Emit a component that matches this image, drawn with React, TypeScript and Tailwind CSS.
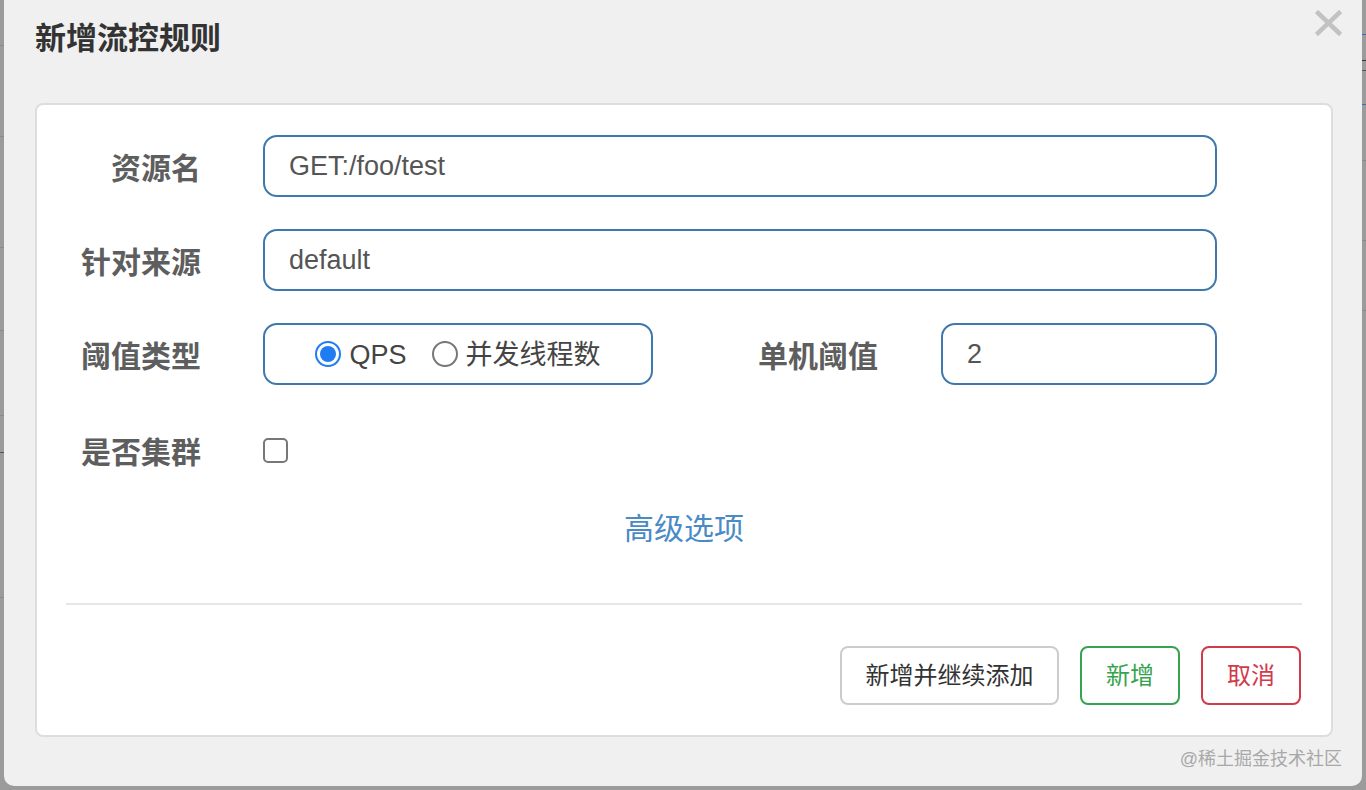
import React from "react";

const FONT = { fontFamily: '"Liberation Sans", "Noto Sans CJK SC", sans-serif' };

function Strip({ lines }: { lines: { top: number; color: string }[] }) {
  return (
    <div className="relative w-[4px] h-full shrink-0 bg-[#9b9b9b]">
      {lines.map((l, i) => (
        <div key={i} className="absolute left-0 w-full h-[1px]" style={{ top: l.top, background: l.color }} />
      ))}
    </div>
  );
}

function Label({ children, w = "w-[164px]" }: { children: React.ReactNode; w?: string }) {
  return (
    <div className={`${w} shrink-0 pt-[6px] text-right text-[30px] font-bold text-[#5e5e5e] leading-none`}>{children}</div>
  );
}

function TextBox({ value, w }: { value: string; w: string }) {
  return (
    <div className={`${w} h-[62px] border-2 border-[#3f78ad] rounded-[14px] flex items-center pl-[24px] text-[27px] text-[#555]`}>
      {value}
    </div>
  );
}

export default function App() {
  return (
    <div className="w-[1366px] h-[790px] flex bg-[#9b9b9b] overflow-hidden" style={FONT}>
      <Strip
        lines={[
          { top: 45, color: "#8a8a8a" },
          { top: 136, color: "#8a8a8a" },
          { top: 247, color: "#8a8a8a" },
          { top: 330, color: "#8a8a8a" },
          { top: 415, color: "#8a8a8a" },
          { top: 452, color: "#555" },
          { top: 597, color: "#8a8a8a" },
        ]}
      />
      <div className="relative w-[1358px] h-[786px] shrink-0 bg-[#f0f0f0] rounded-b-[10px] flex flex-col">
        <div className="h-[76px] flex items-center pl-[31px] text-[31px] font-bold text-[#333] leading-none">
          新增流控规则
        </div>
        <button className="absolute right-[20px] top-[10px] w-[27px] h-[26px]">
          <svg width="27" height="26" viewBox="0 0 27 26">
            <path d="M3 3 L24 23 M24 3 L3 23" stroke="#c2c2c2" strokeWidth="4.5" strokeLinecap="square" />
          </svg>
        </button>
        <div className="mt-[27px] ml-[31px] mr-[29px] h-[634px] border-2 border-[#dddddd] rounded-[8px] bg-white flex flex-col pt-[30px]">
          <div className="flex flex-col gap-[32px]">
            <div className="flex items-center h-[62px]">
              <Label>资源名</Label>
              <div className="ml-[62px]">
                <TextBox value="GET:/foo/test" w="w-[954px]" />
              </div>
            </div>
            <div className="flex items-center h-[62px]">
              <Label>针对来源</Label>
              <div className="ml-[62px]">
                <TextBox value="default" w="w-[954px]" />
              </div>
            </div>
            <div className="flex items-center h-[62px]">
              <Label>阈值类型</Label>
              <div className="ml-[62px] w-[390px] h-[62px] border-2 border-[#3f78ad] rounded-[14px] flex items-center justify-center text-[27px] text-[#444]">
                <span className="w-[26px] h-[26px] rounded-full border-2 border-[#1f7cf3] flex items-center justify-center">
                  <span className="w-[16px] h-[16px] rounded-full bg-[#1f7cf3]" />
                </span>
                <span className="ml-[8px] pt-[3px]">QPS</span>
                <span className="ml-[25px] w-[26px] h-[26px] rounded-full border-2 border-[#777]" />
                <span className="ml-[8px] pt-[3px]">并发线程数</span>
              </div>
              <Label w="w-[225px]">单机阈值</Label>
              <div className="ml-[63px]">
                <TextBox value="2" w="w-[276px]" />
              </div>
            </div>
            <div className="flex items-center h-[62px] pt-[4px]">
              <Label>是否集群</Label>
              <div className="ml-[62px] w-[25px] h-[25px] border-2 border-[#777] rounded-[5px] bg-white" />
            </div>
          </div>
          <div className="mt-[29px] h-[40px] flex items-center justify-center text-[30px] text-[#4a8ac5]">高级选项</div>
          <div className="mt-[55px] mx-[29px] h-[2px] bg-[#e6e6e6]" />
          <div className="mt-[41px] pr-[30px] flex justify-end gap-[21px]">
            <button className="h-[59px] w-[219px] border-2 border-[#cccccc] rounded-[8px] text-[24px] text-[#333] bg-white">
              新增并继续添加
            </button>
            <button className="h-[59px] w-[100px] border-2 border-[#37a24f] rounded-[8px] text-[24px] text-[#37a24f] bg-white">
              新增
            </button>
            <button className="h-[59px] w-[100px] border-2 border-[#d03a4b] rounded-[8px] text-[24px] text-[#d03a4b] bg-white">
              取消
            </button>
          </div>
        </div>
        <div className="absolute right-[20px] bottom-[18px] text-[18px] text-[#a8a8a8] leading-none">@稀土掘金技术社区</div>
      </div>
      <Strip
        lines={[
          { top: 34, color: "#3d6fa5" },
          { top: 60, color: "#333" },
          { top: 70, color: "#555" },
          { top: 104, color: "#3d6fa5" },
          { top: 160, color: "#8a8a8a" },
          { top: 240, color: "#8a8a8a" },
          { top: 310, color: "#8a8a8a" },
        ]}
      />
    </div>
  );
}
